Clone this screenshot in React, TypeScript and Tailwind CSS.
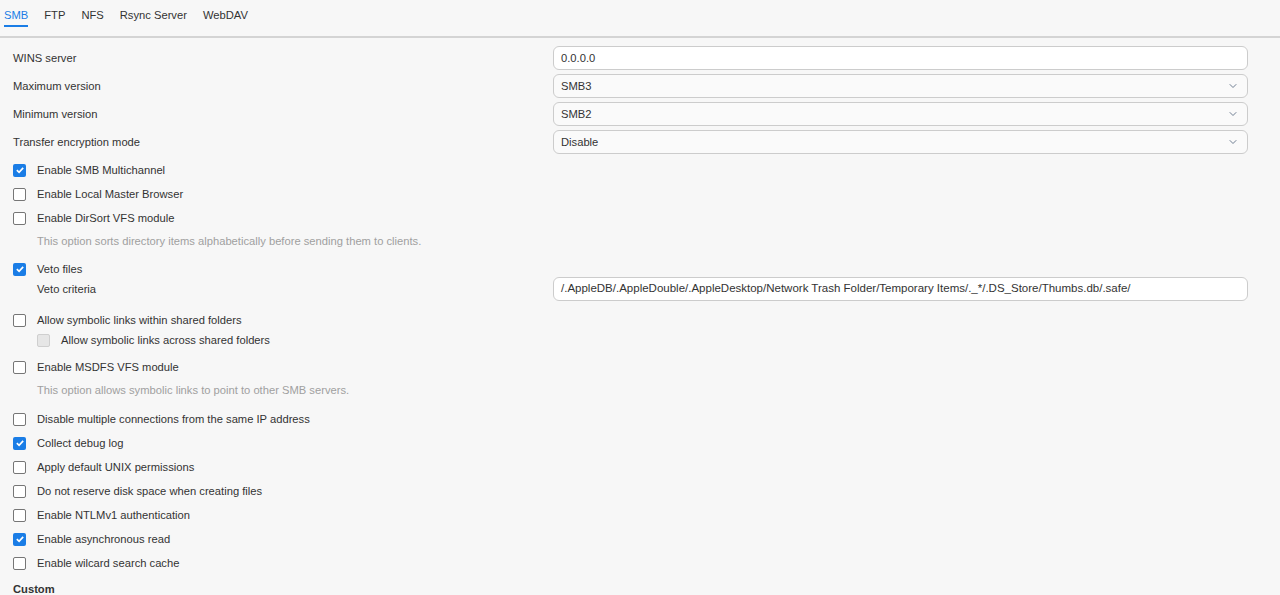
import { ChevronDown } from "lucide-react";

type Check = { label: string; checked?: boolean; disabled?: boolean };

function Box({ checked, disabled }: { checked?: boolean; disabled?: boolean }) {
  if (checked) {
    return (
      <span className="flex h-[13px] w-[13px] shrink-0 items-center justify-center rounded-[2px] bg-[#1a7de6]">
        <svg viewBox="0 0 12 12" className="h-[10px] w-[10px]" fill="none" stroke="white" strokeWidth="2">
          <path d="M2.2 6.2 L4.9 8.8 L9.8 3.4" />
        </svg>
      </span>
    );
  }
  return (
    <span
      className={
        disabled
          ? "h-[13px] w-[13px] shrink-0 rounded-[2px] border border-[#cfcfcf] bg-[#e6e6e6]"
          : "h-[13px] w-[13px] shrink-0 rounded-[2px] border border-[#767676] bg-white"
      }
    />
  );
}

function CheckRow({ label, checked, disabled, nested, h = "h-[24px]" }: Check & { nested?: boolean; h?: string }) {
  return (
    <div className={`flex items-center gap-[11px] ${h} ${nested ? "pl-[37px]" : "pl-[13px]"}`}>
      <Box checked={checked} disabled={disabled} />
      <span>{label}</span>
    </div>
  );
}

function Field({ label, value, select }: { label: string; value: string; select?: boolean }) {
  return (
    <div className="flex h-[28px] items-center pl-[13px] pr-[32px]">
      <span className="w-[540px] shrink-0">{label}</span>
      <div
        className={
          select
            ? "flex h-[24px] flex-1 items-center justify-between rounded-[6px] border border-[#cccccc] bg-[#fafafa] pl-[7px] pr-[8px]"
            : "flex h-[24px] flex-1 items-center rounded-[6px] border border-[#cccccc] bg-white pl-[7px]"
        }
      >
        <span className="text-[#333]">{value}</span>
        {select && <ChevronDown className="h-[12px] w-[12px] text-[#5f6f86]" strokeWidth={1.8} />}
      </div>
    </div>
  );
}

function Hint({ children }: { children: string }) {
  return <div className="flex h-[22px] items-center pl-[37px] text-[#a0a0a0]">{children}</div>;
}

export default function App() {
  const tabs = ["SMB", "FTP", "NFS", "Rsync Server", "WebDAV"];
  return (
    <div
      className="h-[595px] w-[1280px] overflow-hidden bg-[#f7f7f7] text-[11.2px] text-[#333333]"
      style={{ fontFamily: '"Liberation Sans", Arial, sans-serif' }}
    >
      {/* tabs */}
      <div className="flex h-[38px] gap-[16px] border-b-2 border-[#d4d4d4] pl-[4px] text-[11.2px]">
        {tabs.map((t, i) => (
          <div key={t} className="relative flex h-[27px] items-center pt-[3px]">
            <span className={i === 0 ? "text-[#1a7de6]" : "text-[#333]"}>{t}</span>
            {i === 0 && <span className="absolute bottom-0 left-0 right-0 h-[2px] bg-[#1a7de6]" />}
          </div>
        ))}
      </div>

      <div className="pt-[6px]">
        <Field label="WINS server" value="0.0.0.0" />
        <Field label="Maximum version" value="SMB3" select />
        <Field label="Minimum version" value="SMB2" select />
        <Field label="Transfer encryption mode" value="Disable" select />

        <div className="pt-[2px]">
          <CheckRow label="Enable SMB Multichannel" checked />
          <CheckRow label="Enable Local Master Browser" />
          <CheckRow label="Enable DirSort VFS module" />
          <Hint>This option sorts directory items alphabetically before sending them to clients.</Hint>
        </div>

        <div className="pt-[6px]">
          <CheckRow label="Veto files" checked h="h-[22px]" />
          <div className="flex h-[18px] items-center pl-[37px] pr-[32px]">
            <span className="w-[516px] shrink-0">Veto criteria</span>
            <div className="flex h-[24px] flex-1 items-center rounded-[6px] border border-[#cccccc] bg-white pl-[7px] text-[11.5px]">
              /.AppleDB/.AppleDouble/.AppleDesktop/Network Trash Folder/Temporary Items/._*/.DS_Store/Thumbs.db/.safe/
            </div>
          </div>
        </div>

        <div className="pt-[12px]">
          <CheckRow label="Allow symbolic links within shared folders" h="h-[20px]" />
          <CheckRow label="Allow symbolic links across shared folders" disabled nested h="h-[20px]" />
        </div>

        <div className="pt-[5px]">
          <CheckRow label="Enable MSDFS VFS module" />
          <Hint>This option allows symbolic links to point to other SMB servers.</Hint>
        </div>

        <div className="pt-[6px]">
          <CheckRow label="Disable multiple connections from the same IP address" />
          <CheckRow label="Collect debug log" checked />
          <CheckRow label="Apply default UNIX permissions" />
          <CheckRow label="Do not reserve disk space when creating files" />
          <CheckRow label="Enable NTLMv1 authentication" />
          <CheckRow label="Enable asynchronous read" checked />
          <CheckRow label="Enable wilcard search cache" />
        </div>

        <div className="flex h-[28px] items-center pl-[13px] font-bold">Custom</div>
      </div>
    </div>
  );
}
